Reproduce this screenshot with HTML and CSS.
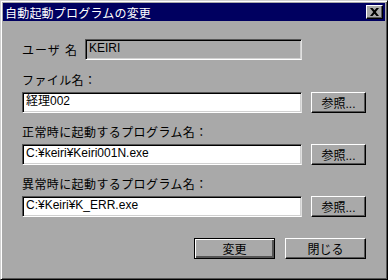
FILE: index.html
```html
<!DOCTYPE html>
<html lang="ja">

<head>
    <meta charset="UTF-8">
    <title>自動起動プログラムの変更</title>
    <link rel="stylesheet" href="styles.css">
</head>

<body>
    <div class="window">
        <div class="titlebar">
            <span class="title">自動起動プログラムの変更</span>
            <button class="close" aria-label="閉じる">
                <svg width="9" height="8" viewBox="0 0 9 8">
                    <path d="M0 0h2.5l2 2.3 2-2.3h2.5l-3.2 4 3.2 4h-2.5l-2-2.3-2 2.3h-2.5l3.2-4z" fill="#000"/>
                </svg>
            </button>
        </div>

        <div class="content">
            <!-- ユーザ名 -->
            <div class="user-row">
                <span class="user-label">ユーザ 名</span>
                <div class="field disabled">KEIRI</div>
            </div>

            <div class="label">ファイル名：</div>
            <div class="input-row">
                <div class="field">経理002</div>
                <button class="btn browse">参照...</button>
            </div>

            <div class="label">正常時に起動するプログラム名：</div>
            <div class="input-row">
                <div class="field">C:¥keiri¥Keiri001N.exe</div>
                <button class="btn browse">参照...</button>
            </div>

            <div class="label">異常時に起動するプログラム名：</div>
            <div class="input-row">
                <div class="field">C:¥Keiri¥K_ERR.exe</div>
                <button class="btn browse">参照...</button>
            </div>

            <div class="actions">
                <button class="btn default">変更</button>
                <button class="btn">閉じる</button>
            </div>
        </div>
    </div>
</body>

</html>
```

FILE: styles.css
```css
body {
    margin: 0;
    font-family: "Liberation Sans", "Noto Sans CJK JP", sans-serif;
    font-size: 12px;
    color: #000;
}

.window {
    width: 388px;
    height: 280px;
    box-sizing: border-box;
    padding: 2px;
    background-color: #a9a9a9;
    border: 1px solid;
    border-color: #d0d0d0 #000 #000 #d0d0d0;
    box-shadow: inset 1px 1px #fff, inset -1px -1px #555;
}

.titlebar {
    height: 18px;
    display: flex;
    align-items: center;
    justify-content: space-between;
    padding-left: 2px;
    background-color: #000060;
    color: #fff;
}

.title {
    font-size: 12px;
    letter-spacing: 0.2px;
}

.close {
    width: 17px;
    height: 14px;
    margin-right: 2px;
    padding: 0;
    display: flex;
    align-items: center;
    justify-content: center;
    background-color: #a9a9a9;
    border: 1px solid;
    border-color: #fff #000 #000 #fff;
    box-shadow: inset -1px -1px #555;
}

.content {
    padding: 0 19px;
}

.user-row {
    display: flex;
    align-items: center;
    margin-top: 18px;
}

.user-label {
    width: 63px;
    letter-spacing: 1px;
}

.field {
    box-sizing: border-box;
    width: 280px;
    height: 21px;
    line-height: 17px;
    padding: 0 3px;
    background-color: #fff;
    border: 1px solid;
    border-color: #555 #e0e0e0 #fff #555;
    box-shadow: inset 1px 1px #000, inset -1px -1px #d0d0d0;
    white-space: nowrap;
}

.field.disabled {
    width: 217px;
    background-color: #a9a9a9;
}

.label {
    height: 14px;
    line-height: 14px;
    margin-top: 13px;
    letter-spacing: 0.4px;
}

.user-row + .label {
    margin-top: 14px;
}

.input-row {
    display: flex;
    gap: 9px;
    margin-top: 4px;
}

.btn {
    box-sizing: border-box;
    height: 21px;
    padding: 0;
    font-family: inherit;
    font-size: 12px;
    color: #000;
    background-color: #a9a9a9;
    border: 1px solid;
    border-color: #fff #000 #000 #fff;
    box-shadow: inset -1px -1px #555;
}

.browse {
    width: 55px;
}

.actions {
    display: flex;
    justify-content: flex-end;
    gap: 10px;
    margin-top: 21px;
}

.actions .btn {
    width: 81px;
}

.btn.default {
    border-color: #000;
    box-shadow: inset 1px 1px #fff, inset -2px -2px #555;
}
```
